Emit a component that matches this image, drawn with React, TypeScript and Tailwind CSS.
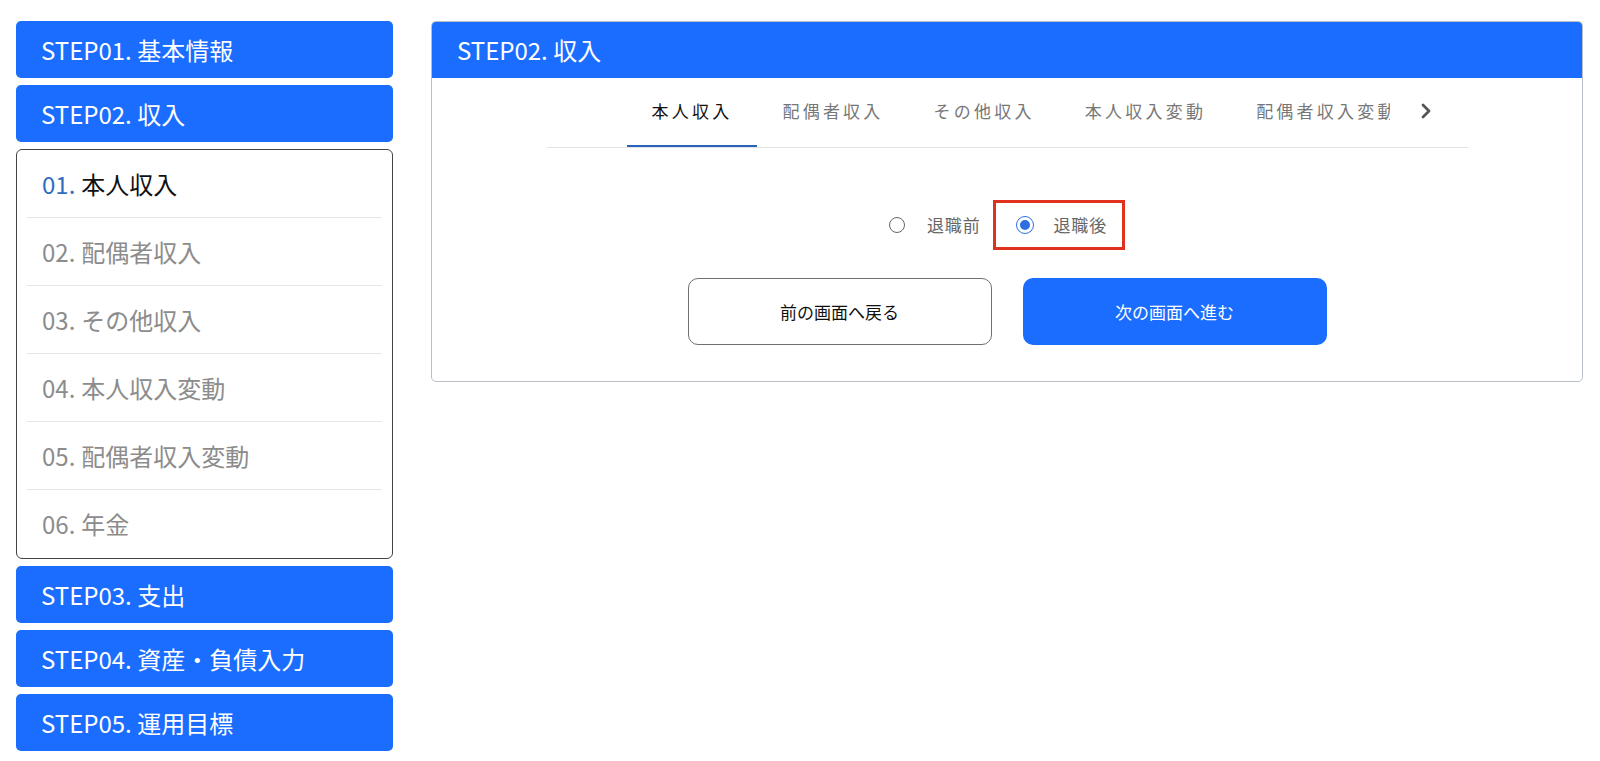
import { ChevronRight } from 'lucide-react';

const steps = ['STEP01. 基本情報', 'STEP02. 収入'];
const laterSteps = ['STEP03. 支出', 'STEP04. 資産・負債入力', 'STEP05. 運用目標'];

const subItems = [
  { no: '01.', label: '本人収入', active: true },
  { no: '02.', label: '配偶者収入', active: false },
  { no: '03.', label: 'その他収入', active: false },
  { no: '04.', label: '本人収入変動', active: false },
  { no: '05.', label: '配偶者収入変動', active: false },
  { no: '06.', label: '年金', active: false },
];

const tabs = ['本人収入', '配偶者収入', 'その他収入', '本人収入変動', '配偶者収入変動'];

function StepButton({ label }: { label: string }) {
  return (
    <div className="h-[57px] rounded-[5px] bg-[#1b6dff] pl-[25px] flex items-center text-white text-[24px] leading-none">
      {label}
    </div>
  );
}

export default function App() {
  return (
    <div
      className="min-h-[761px] bg-white flex items-start gap-[38px] pl-[16px] pr-[17px] pt-[21px]"
      style={{ fontFamily: '"Noto Sans CJK JP", "Noto Sans", sans-serif' }}
    >
      {/* sidebar */}
      <aside className="w-[377px] shrink-0 flex flex-col gap-[7px]">
        {steps.map((s) => (
          <StepButton key={s} label={s} />
        ))}
        <div className="border border-[#444] rounded-[6px] px-[10px]">
          {subItems.map((item, i) => (
            <div
              key={item.no}
              className={`h-[68px] flex items-center pl-[15px] text-[24px] leading-none ${
                i < subItems.length - 1 ? 'border-b border-[#e6e6e6]' : ''
              }`}
            >
              {item.active ? (
                <>
                  <span className="text-[#2f6cc1]">{item.no}</span>
                  <span className="ml-[6px] text-[#111]">{item.label}</span>
                </>
              ) : (
                <span className="text-[#8c8c8c]">
                  {item.no}
                  <span className="ml-[6px]">{item.label}</span>
                </span>
              )}
            </div>
          ))}
        </div>
        {laterSteps.map((s) => (
          <StepButton key={s} label={s} />
        ))}
      </aside>

      {/* main card */}
      <main className="flex-1 border border-[#b8bfc6] rounded-[5px] overflow-hidden">
        <div className="h-[56px] bg-[#1b6dff] pl-[25px] flex items-center text-white text-[24px] leading-none">
          STEP02. 収入
        </div>

        <div className="pt-[21px] pb-[36px] flex flex-col items-center">
          {/* tabs */}
          <div className="w-[921px] flex border-b border-[#e3e3e3]">
            <div className="w-[80px] shrink-0" />
            <div className="flex-1 overflow-hidden flex whitespace-nowrap">
              {tabs.map((t, i) => (
                <div
                  key={t}
                  className={`shrink-0 px-[25px] pb-[22px] text-[17px] leading-[24px] tracking-[0.19em] -mb-px ${
                    i === 0
                      ? 'text-[#111] border-b-[3px] border-[#2b63b8]'
                      : 'text-[#777] border-b-[3px] border-transparent'
                  }`}
                >
                  {t}
                </div>
              ))}
            </div>
            <div className="w-[78px] shrink-0 pl-[24px] text-[#555]">
              <ChevronRight size={24} strokeWidth={2.8} />
            </div>
          </div>

          {/* radios */}
          <div className="mt-[52px] flex items-center text-[17px] text-[#666] tracking-[0.05em]">
            <label className="flex items-center gap-[22px]">
              <span className="w-[16px] h-[16px] rounded-full border-[1.5px] border-[#666]" />
              <span>退職前</span>
            </label>
            <label className="ml-[12px] h-[50px] border-[3px] border-[#e0301e] flex items-center gap-[20px] pl-[20px] pr-[15px]">
              <span className="w-[18px] h-[18px] rounded-full border-[1.5px] border-[#2d6fe0] flex items-center justify-center">
                <span className="w-[10px] h-[10px] rounded-full bg-[#2d6fe0]" />
              </span>
              <span>退職後</span>
            </label>
          </div>

          {/* buttons */}
          <div className="mt-[28px] flex gap-[31px]">
            <button className="w-[304px] h-[67px] rounded-[10px] border border-[#707070] bg-white text-[17px] text-[#111]">
              前の画面へ戻る
            </button>
            <button className="w-[304px] h-[67px] rounded-[10px] bg-[#1b6dff] text-[17px] text-white">
              次の画面へ進む
            </button>
          </div>
        </div>
      </main>
    </div>
  );
}
